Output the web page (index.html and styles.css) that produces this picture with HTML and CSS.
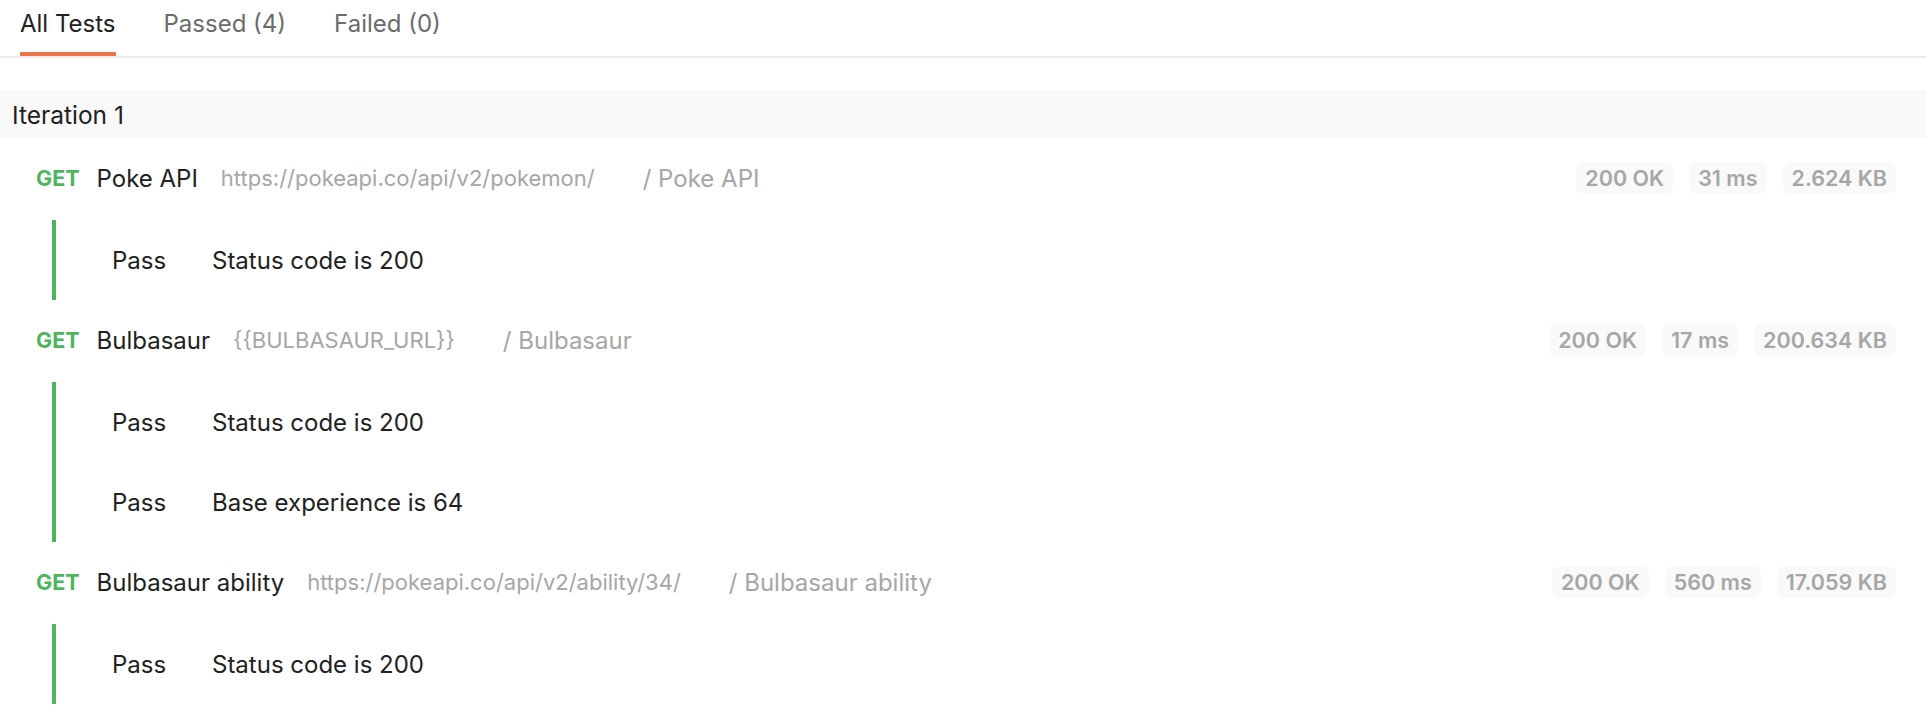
FILE: index.html
```html
<!DOCTYPE html>
<html lang="en">
<head>
<meta charset="utf-8">
<title>Test Results</title>
<link rel="stylesheet" href="styles.css">
</head>
<body>
<div class="tabs">
  <div class="tab active">All Tests</div>
  <div class="tab">Passed (4)</div>
  <div class="tab">Failed (0)</div>
</div>

<div class="iteration">Iteration 1</div>

<div class="request">
  <div class="req-head">
    <span class="method">GET</span>
    <span class="name">Poke API</span>
    <span class="url">https://pokeapi.co/api/v2/pokemon/</span>
    <span class="path">/ Poke API</span>
    <div class="meta">
      <span class="badge">200 OK</span>
      <span class="badge">31 ms</span>
      <span class="badge">2.624 KB</span>
    </div>
  </div>
  <div class="tests">
    <div class="test"><span class="status">Pass</span><span class="test-name">Status code is 200</span></div>
  </div>
</div>

<div class="request">
  <div class="req-head">
    <span class="method">GET</span>
    <span class="name">Bulbasaur</span>
    <span class="url">{{BULBASAUR_URL}}</span>
    <span class="path">/ Bulbasaur</span>
    <div class="meta">
      <span class="badge">200 OK</span>
      <span class="badge">17 ms</span>
      <span class="badge">200.634 KB</span>
    </div>
  </div>
  <div class="tests">
    <div class="test"><span class="status">Pass</span><span class="test-name">Status code is 200</span></div>
    <div class="test"><span class="status">Pass</span><span class="test-name">Base experience is 64</span></div>
  </div>
</div>

<div class="request">
  <div class="req-head">
    <span class="method">GET</span>
    <span class="name">Bulbasaur ability</span>
    <span class="url">https://pokeapi.co/api/v2/ability/34/</span>
    <span class="path">/ Bulbasaur ability</span>
    <div class="meta">
      <span class="badge">200 OK</span>
      <span class="badge">560 ms</span>
      <span class="badge">17.059 KB</span>
    </div>
  </div>
  <div class="tests">
    <div class="test"><span class="status">Pass</span><span class="test-name">Status code is 200</span></div>
  </div>
</div>
</body>
</html>
```

FILE: styles.css
```css
* { box-sizing: border-box; }

body {
  margin: 0;
  background: #ffffff;
  font-family: Inter, "Noto Sans", "Liberation Sans", sans-serif;
  color: #212121;
  overflow: hidden;
}

.tabs {
  display: flex;
  gap: 48px;
  padding-left: 20px;
  border-bottom: 2px solid #ebebeb;
  height: 58px;
}

.tab {
  font-size: 24px;
  line-height: 32px;
  padding-top: 8px;
  height: 56px;
  border-bottom: 4px solid transparent;
  color: #6b6b6b;
}

.tab.active {
  color: #212121;
  border-bottom-color: #ee7448;
}

.iteration {
  margin-top: 32px;
  height: 48px;
  background: #f9f9f9;
  padding-left: 12px;
  padding-top: 2px;
  font-size: 24.5px;
  line-height: 46px;
  color: #212121;
}

.req-head {
  display: flex;
  align-items: center;
  height: 82px;
  padding-left: 36px;
  padding-right: 30px;
  padding-bottom: 2px;
}

.method {
  font-size: 21.5px;
  font-weight: 700;
  color: #4cb65a;
  margin-right: 17px;
}

.name {
  font-size: 24px;
  color: #212121;
  margin-right: 23px;
}

.url {
  font-size: 22px;
  color: #a6a6a6;
  margin-right: 48px;
}

.path {
  font-size: 24px;
  color: #a6a6a6;
}

.meta {
  margin-left: auto;
  display: flex;
  gap: 16px;
}

.badge {
  background: #f9f9f9;
  border-radius: 8px;
  height: 32px;
  line-height: 32px;
  padding: 0 9px;
  font-size: 21.5px;
  font-weight: 600;
  color: #a6a6a6;
}

.tests {
  margin-left: 52px;
  border-left: 4px solid #4cb65a;
}

.test {
  display: flex;
  align-items: center;
  height: 80px;
  padding-left: 56px;
  font-size: 24px;
  color: #212121;
}

.status {
  width: 100px;
}
```
